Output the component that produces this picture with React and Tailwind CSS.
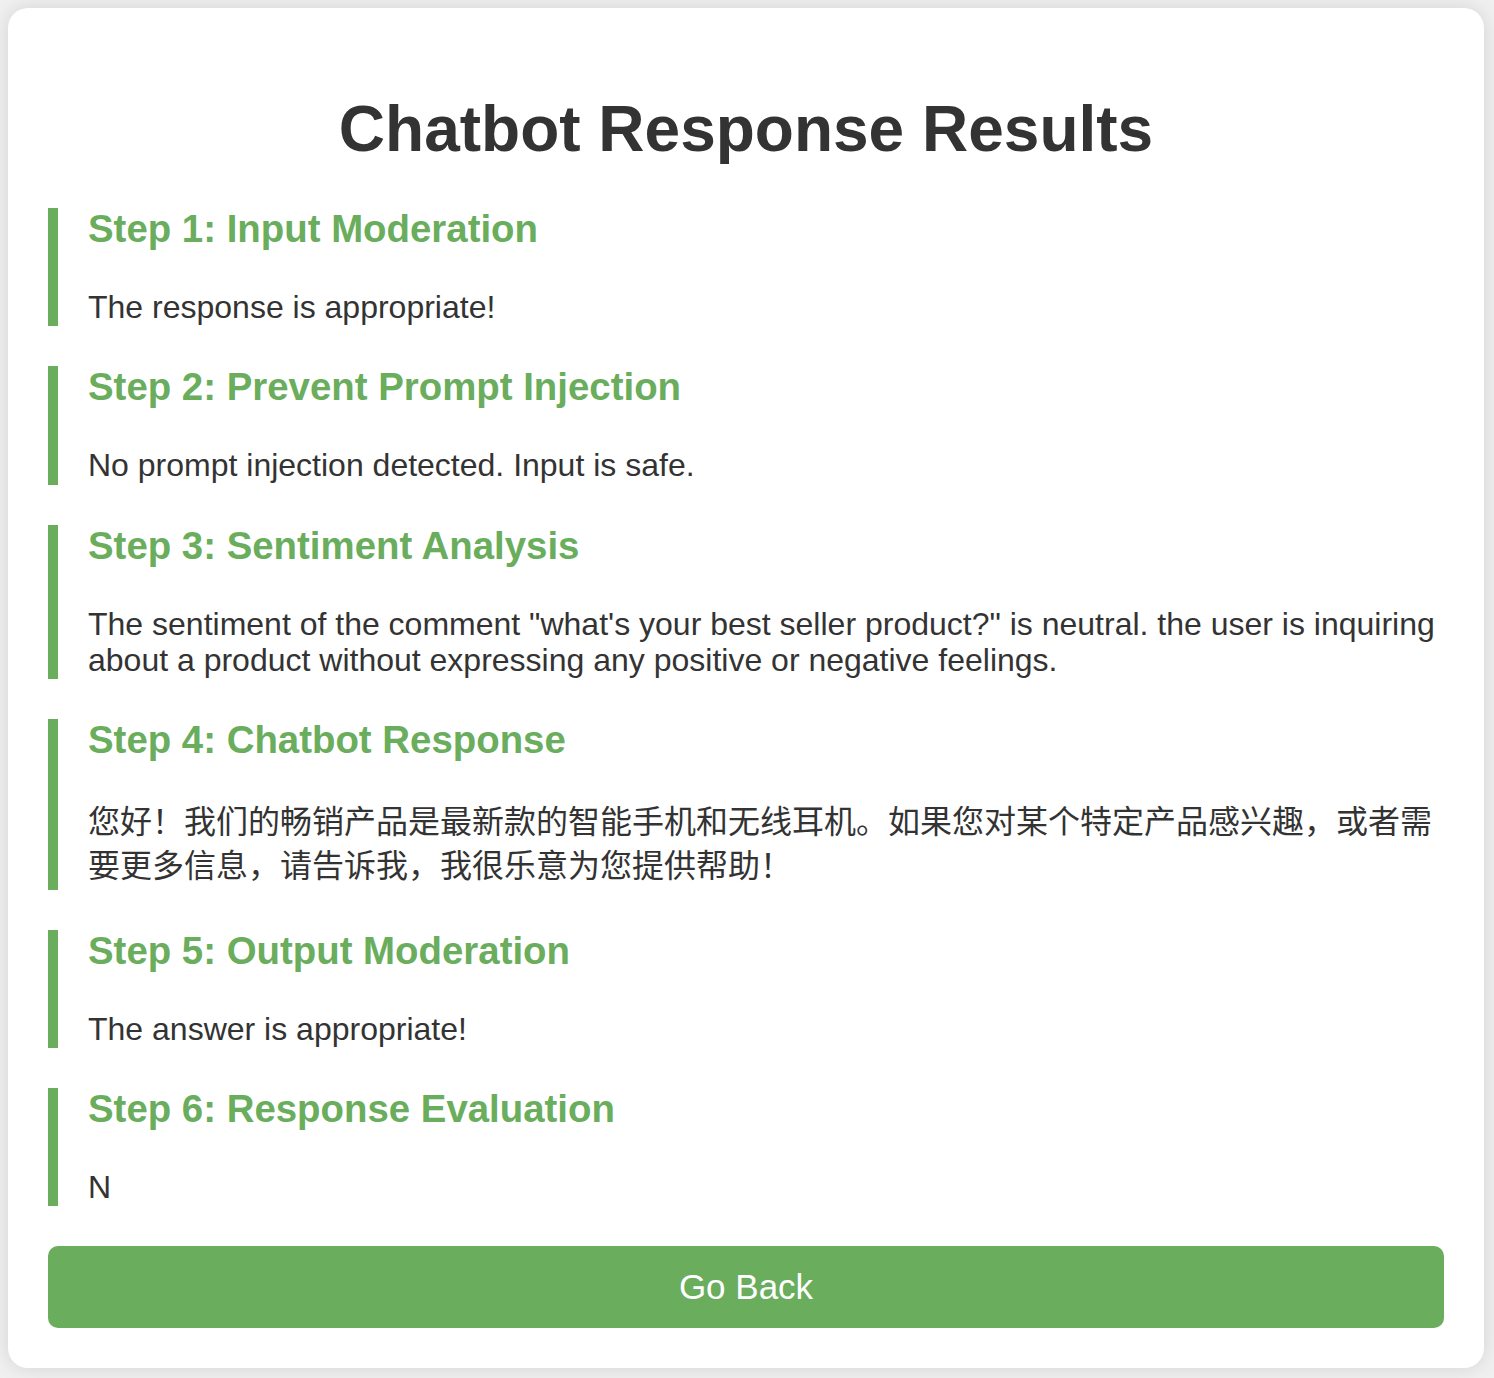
const steps = [
  { title: 'Step 1: Input Moderation', body: 'The response is appropriate!' },
  { title: 'Step 2: Prevent Prompt Injection', body: 'No prompt injection detected. Input is safe.' },
  {
    title: 'Step 3: Sentiment Analysis',
    body: 'The sentiment of the comment "what\'s your best seller product?" is neutral. the user is inquiring about a product without expressing any positive or negative feelings.',
  },
  {
    title: 'Step 4: Chatbot Response',
    body: '您好！我们的畅销产品是最新款的智能手机和无线耳机。如果您对某个特定产品感兴趣，或者需要更多信息，请告诉我，我很乐意为您提供帮助！',
    cjk: true,
  },
  { title: 'Step 5: Output Moderation', body: 'The answer is appropriate!' },
  { title: 'Step 6: Response Evaluation', body: 'N' },
]

function StepBlock({ title, body, cjk }) {
  return (
    <section className="mb-[40px] border-l-[10px] border-[#69ad5d] pb-[1.4px] pl-[30px]">
      <h3 className="mb-[39px] text-[38.4px] font-bold leading-[42px] text-[#69ad5d]">{title}</h3>
      <p className={cjk ? 'text-[32px] leading-[44px] text-[#333]' : 'text-[32px] leading-[36px] text-[#333]'}>
        {body}
      </p>
    </section>
  )
}

export default function App() {
  return (
    <main
      className="min-h-screen bg-[#f0f0f0] py-[8px] pl-[8px] pr-[10px]"
      style={{ fontFamily: '"Liberation Sans", Arial, "Noto Sans CJK SC", sans-serif' }}
    >
      <div className="rounded-[20px] bg-white px-[40px] pb-[40px] pt-[40px] shadow-[0_0_20px_rgba(0,0,0,0.12)]">
        <h1 className="mb-[47px] mt-[49px] text-center text-[64px] font-bold leading-[64px] text-[#333]">
          Chatbot Response Results
        </h1>

        {steps.map((step) => (
          <StepBlock key={step.title} {...step} />
        ))}

        <button
          type="button"
          className="block h-[82px] w-full rounded-[10px] bg-[#69ad5d] text-[35px] text-white"
        >
          Go Back
        </button>
      </div>
    </main>
  )
}
